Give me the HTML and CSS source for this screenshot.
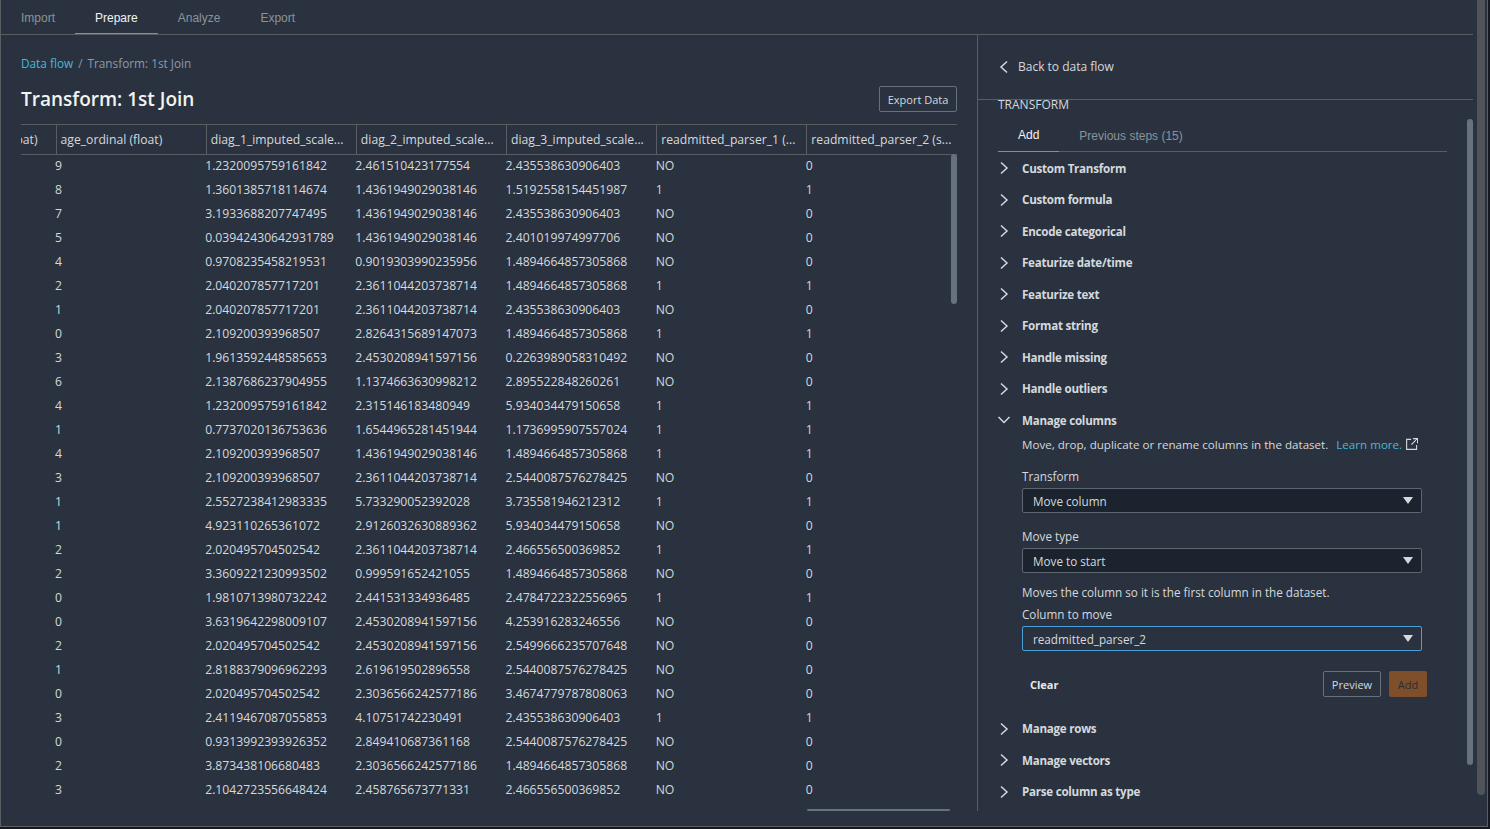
FILE: index.html
```html
<!DOCTYPE html>
<html lang="en">
<head>
    <meta charset="UTF-8">
    <title>Transform: 1st Join</title>
    <link rel="stylesheet" href="styles.css">
</head>
<body>
<div class="app">
    <div class="app-inner">
        <nav class="top-tabs">
            <a class="top-tab">Import</a>
            <a class="top-tab active">Prepare</a>
            <a class="top-tab">Analyze</a>
            <a class="top-tab">Export</a>
        </nav>
        <div class="split">
            <main class="left">
                <div class="crumbs"><a class="link">Data flow</a><span class="sep">/</span><span>Transform: 1st Join</span></div>
                <div class="title-row">
                    <h1 class="title">Transform: 1st Join</h1>
                    <button class="btn export-btn">Export Data</button>
                </div>
                <div class="table-wrap">
                    <table class="grid">
                        <thead>
                            <tr>
                                <th class="col-clip"><div class="clip-text"><span>(float)</span></div></th>
                                <th><div class="th-text">age_ordinal (float)</div></th>
                                <th><div class="th-text">diag_1_imputed_scale...</div></th>
                                <th><div class="th-text">diag_2_imputed_scale...</div></th>
                                <th><div class="th-text">diag_3_imputed_scale...</div></th>
                                <th><div class="th-text">readmitted_parser_1 (...</div></th>
                                <th><div class="th-text">readmitted_parser_2 (s...</div></th>
                            </tr>
                        </thead>
                        <tbody>
                            <tr><td></td><td>9</td><td>1.2320095759161842</td><td>2.461510423177554</td><td>2.435538630906403</td><td>NO</td><td>0</td></tr>
                            <tr><td></td><td>8</td><td>1.3601385718114674</td><td>1.4361949029038146</td><td>1.5192558154451987</td><td>1</td><td>1</td></tr>
                            <tr><td></td><td>7</td><td>3.1933688207747495</td><td>1.4361949029038146</td><td>2.435538630906403</td><td>NO</td><td>0</td></tr>
                            <tr><td></td><td>5</td><td>0.03942430642931789</td><td>1.4361949029038146</td><td>2.401019974997706</td><td>NO</td><td>0</td></tr>
                            <tr><td></td><td>4</td><td>0.9708235458219531</td><td>0.9019303990235956</td><td>1.4894664857305868</td><td>NO</td><td>0</td></tr>
                            <tr><td></td><td>2</td><td>2.040207857717201</td><td>2.3611044203738714</td><td>1.4894664857305868</td><td>1</td><td>1</td></tr>
                            <tr><td></td><td>1</td><td>2.040207857717201</td><td>2.3611044203738714</td><td>2.435538630906403</td><td>NO</td><td>0</td></tr>
                            <tr><td></td><td>0</td><td>2.109200393968507</td><td>2.8264315689147073</td><td>1.4894664857305868</td><td>1</td><td>1</td></tr>
                            <tr><td></td><td>3</td><td>1.9613592448585653</td><td>2.4530208941597156</td><td>0.2263989058310492</td><td>NO</td><td>0</td></tr>
                            <tr><td></td><td>6</td><td>2.1387686237904955</td><td>1.1374663630998212</td><td>2.895522848260261</td><td>NO</td><td>0</td></tr>
                            <tr><td></td><td>4</td><td>1.2320095759161842</td><td>2.315146183480949</td><td>5.934034479150658</td><td>1</td><td>1</td></tr>
                            <tr><td></td><td>1</td><td>0.7737020136753636</td><td>1.6544965281451944</td><td>1.1736995907557024</td><td>1</td><td>1</td></tr>
                            <tr><td></td><td>4</td><td>2.109200393968507</td><td>1.4361949029038146</td><td>1.4894664857305868</td><td>1</td><td>1</td></tr>
                            <tr><td></td><td>3</td><td>2.109200393968507</td><td>2.3611044203738714</td><td>2.5440087576278425</td><td>NO</td><td>0</td></tr>
                            <tr><td></td><td>1</td><td>2.5527238412983335</td><td>5.733290052392028</td><td>3.735581946212312</td><td>1</td><td>1</td></tr>
                            <tr><td></td><td>1</td><td>4.923110265361072</td><td>2.9126032630889362</td><td>5.934034479150658</td><td>NO</td><td>0</td></tr>
                            <tr><td></td><td>2</td><td>2.020495704502542</td><td>2.3611044203738714</td><td>2.466556500369852</td><td>1</td><td>1</td></tr>
                            <tr><td></td><td>2</td><td>3.3609221230993502</td><td>0.999591652421055</td><td>1.4894664857305868</td><td>NO</td><td>0</td></tr>
                            <tr><td></td><td>0</td><td>1.9810713980732242</td><td>2.441531334936485</td><td>2.4784722322556965</td><td>1</td><td>1</td></tr>
                            <tr><td></td><td>0</td><td>3.6319642298009107</td><td>2.4530208941597156</td><td>4.253916283246556</td><td>NO</td><td>0</td></tr>
                            <tr><td></td><td>2</td><td>2.020495704502542</td><td>2.4530208941597156</td><td>2.5499666235707648</td><td>NO</td><td>0</td></tr>
                            <tr><td></td><td>1</td><td>2.8188379096962293</td><td>2.619619502896558</td><td>2.5440087576278425</td><td>NO</td><td>0</td></tr>
                            <tr><td></td><td>0</td><td>2.020495704502542</td><td>2.3036566242577186</td><td>3.4674779787808063</td><td>NO</td><td>0</td></tr>
                            <tr><td></td><td>3</td><td>2.4119467087055853</td><td>4.10751742230491</td><td>2.435538630906403</td><td>1</td><td>1</td></tr>
                            <tr><td></td><td>0</td><td>0.9313992393926352</td><td>2.849410687361168</td><td>2.5440087576278425</td><td>NO</td><td>0</td></tr>
                            <tr><td></td><td>2</td><td>3.873438106680483</td><td>2.3036566242577186</td><td>1.4894664857305868</td><td>NO</td><td>0</td></tr>
                            <tr><td></td><td>3</td><td>2.1042723556648424</td><td>2.458765673771331</td><td>2.466556500369852</td><td>NO</td><td>0</td></tr>
                            <tr><td></td><td>1</td><td>1.0067561524759272</td><td>2.5936030737916924</td><td>4.4064034479150658</td><td>NO</td><td>0</td></tr>
                        </tbody>
                    </table>
                    <div class="vbar"></div>
                    <div class="hbar-track"><div class="hbar"></div></div>
                </div>
            </main>
            <aside class="right">
                <div class="back-row">
                    <svg class="icon" viewBox="0 0 16 16"><path d="M11 2.5 5 8l6 5.5"/></svg>
                    <span>Back to data flow</span>
                </div>
                <div class="panel">
                    <div class="panel-label">TRANSFORM</div>
                    <div class="panel-tabs">
                        <a class="panel-tab active">Add</a>
                        <a class="panel-tab">Previous steps (15)</a>
                    </div>
                    <div class="acc-list">
                        <div class="acc"><svg class="icon" viewBox="0 0 16 16"><path d="M5 2.5 11 8l-6 5.5"/></svg><span>Custom Transform</span></div>
                        <div class="acc"><svg class="icon" viewBox="0 0 16 16"><path d="M5 2.5 11 8l-6 5.5"/></svg><span>Custom formula</span></div>
                        <div class="acc"><svg class="icon" viewBox="0 0 16 16"><path d="M5 2.5 11 8l-6 5.5"/></svg><span>Encode categorical</span></div>
                        <div class="acc"><svg class="icon" viewBox="0 0 16 16"><path d="M5 2.5 11 8l-6 5.5"/></svg><span>Featurize date/time</span></div>
                        <div class="acc"><svg class="icon" viewBox="0 0 16 16"><path d="M5 2.5 11 8l-6 5.5"/></svg><span>Featurize text</span></div>
                        <div class="acc"><svg class="icon" viewBox="0 0 16 16"><path d="M5 2.5 11 8l-6 5.5"/></svg><span>Format string</span></div>
                        <div class="acc"><svg class="icon" viewBox="0 0 16 16"><path d="M5 2.5 11 8l-6 5.5"/></svg><span>Handle missing</span></div>
                        <div class="acc"><svg class="icon" viewBox="0 0 16 16"><path d="M5 2.5 11 8l-6 5.5"/></svg><span>Handle outliers</span></div>
                        <div class="acc"><svg class="icon" viewBox="0 0 16 16"><path d="M2.5 5 8 10.5 13.5 5"/></svg><span>Manage columns</span></div>
                        <div class="acc-body">
                            <p class="desc">Move, drop, duplicate or rename columns in the dataset.<a class="link learn">Learn more.</a><svg class="ext" viewBox="0 0 13 13"><path d="M5.5 1.5H.7v10.8h10.8V7.5M7.5.7h5v5M12.3.7 5.8 7.2"/></svg></p>
                            <label class="field-label first">Transform</label>
                            <div class="select"><span>Move column</span><i class="caret"></i></div>
                            <label class="field-label">Move type</label>
                            <div class="select"><span>Move to start</span><i class="caret"></i></div>
                            <p class="hint">Moves the column so it is the first column in the dataset.</p>
                            <label class="field-label tight">Column to move</label>
                            <div class="select focus"><span>readmitted_parser_2</span><i class="caret"></i></div>
                            <div class="actions">
                                <a class="clear">Clear</a>
                                <button class="btn preview-btn">Preview</button>
                                <button class="btn add-btn">Add</button>
                            </div>
                        </div>
                        <div class="acc"><svg class="icon" viewBox="0 0 16 16"><path d="M5 2.5 11 8l-6 5.5"/></svg><span>Manage rows</span></div>
                        <div class="acc"><svg class="icon" viewBox="0 0 16 16"><path d="M5 2.5 11 8l-6 5.5"/></svg><span>Manage vectors</span></div>
                        <div class="acc"><svg class="icon" viewBox="0 0 16 16"><path d="M5 2.5 11 8l-6 5.5"/></svg><span>Parse column as type</span></div>
                    </div>
                    <div class="panel-bar"></div>
                </div>
            </aside>
        </div>
    </div>
    <div class="page-bar"></div>
</div>
</body>
</html>
```

FILE: styles.css
```css
html, body {
    height: 100%;
}
body {
    margin: 0;
    background-color: #16191f;
    font-family: "Open Sans", "Noto Sans", sans-serif;
    font-size: 12px;
    color: #d5d9dc;
    overflow: hidden;
}
.app {
    position: relative;
    width: 1488px;
    height: 827px;
    box-sizing: border-box;
    background-color: #2a3240;
    border-left: 1px solid #5a5d61;
    border-bottom: 1px solid #5a5d61;
    border-right: 1px solid #5a5d61;
    overflow: hidden;
}
.app-inner {
    width: 1472px;
}
.page-bar {
    position: absolute;
    top: 0;
    left: 1476px;
    width: 8px;
    height: 795px;
    border-radius: 0 0 4px 4px;
    background-color: #50535a;
}

/* top tabs */
.top-tabs {
    display: flex;
    height: 34px;
    border-bottom: 1px solid #5a5d61;
}
.top-tab {
    padding: 0 20px;
    line-height: 36px;
    height: 34px;
    box-sizing: border-box;
    font-family: "Liberation Sans", Arial, sans-serif;
    font-size: 12px;
    color: #8a929c;
}
.top-tab.active {
    color: #f2f3f3;
    border-bottom: 1px solid #4b9fd8;
}

.split {
    display: flex;
    height: 776px;
}

/* left side */
.left {
    width: 977px;
    flex: none;
    box-sizing: border-box;
    height: 776px;
    border-right: 1px solid #5a5d61;
    padding: 20px 20px 0 20px;
    overflow: hidden;
}
.crumbs {
    display: flex;
    line-height: 16px;
    color: #8d99a8;
    font-size: 11.8px;
}
.link {
    color: #44b9d6;
}
.sep {
    margin: 0 5px;
}
.title-row {
    display: flex;
    justify-content: space-between;
    align-items: center;
    margin-top: 8px;
    height: 38px;
}
.title {
    margin: 2px 0 0 0;
    font-size: 19px;
    font-weight: 600;
    color: #f2f3f3;
}
.btn {
    font-family: inherit;
    font-size: 11px;
    font-weight: 500;
    color: #d5d9dc;
    background: transparent;
    border: 1px solid #687078;
    border-radius: 2px;
    padding: 0;
    height: 26px;
}
.export-btn {
    width: 78px;
    margin-top: 2px;
}
.table-wrap {
    position: relative;
    margin-top: 7px;
    width: 936px;
    height: 687px;
    overflow: hidden;
}
.grid {
    border-collapse: collapse;
    table-layout: fixed;
    width: 936px;
    font-size: 12.2px;
}
.grid th {
    width: 150px;
    height: 30px;
    padding: 0;
    font-weight: 400;
    text-align: left;
    border-top: 1px solid #5a5d61;
    border-bottom: 1px solid #5a5d61;
    border-left: 1px solid #5a5d61;
    box-sizing: border-box;
}
.grid th.col-clip {
    width: 35px;
    border-left: 0;
}
.clip-text {
    display: flex;
    justify-content: flex-end;
    padding-right: 18px;
    overflow: hidden;
    white-space: nowrap;
}
.clip-text span {
    flex: none;
}
.th-text {
    padding-left: 4px;
    white-space: nowrap;
    overflow: hidden;
}
.grid td {
    height: 24px;
    padding: 0 0 2px 0;
    box-sizing: border-box;
    white-space: nowrap;
    line-height: 22px;
    position: relative;
    left: -1px;
}
.vbar {
    position: absolute;
    top: 30px;
    right: 0;
    width: 6px;
    height: 150px;
    border-radius: 3px;
    background-color: #687180;
}
.hbar-track {
    position: absolute;
    bottom: 0;
    left: 0;
    width: 100%;
    height: 2px;
    background-color: #2a3240;
}
.hbar {
    margin-left: 786px;
    width: 143px;
    height: 2px;
    border-radius: 1px;
    background-color: #687180;
}

/* right side */
.right {
    position: relative;
    flex: 1;
    height: 776px;
    overflow: hidden;
}
.back-row {
    display: flex;
    align-items: center;
    height: 65px;
    padding-left: 18px;
    padding-bottom: 1px;
    border-bottom: 1px solid #5a5d61;
    box-sizing: border-box;
    gap: 6px;
}
.icon {
    width: 16px;
    height: 16px;
    fill: none;
    stroke: #d5d9dc;
    stroke-width: 1.5;
    flex: none;
}
.panel {
    padding: 0 26px 0 20px;
}
.panel-label {
    line-height: 12px;
    margin-top: -1px;
}
.panel-tabs {
    display: flex;
    height: 36px;
    margin-top: 5px;
    border-bottom: 1px solid #5a5d61;
    box-sizing: border-box;
    align-items: stretch;
}
.panel-tab {
    padding: 13px 20px 0 20px;
    font-family: "Liberation Sans", Arial, sans-serif;
    font-size: 12px;
    color: #8a929c;
    line-height: 14px;
}
.panel-tab.active {
    color: #f2f3f3;
    border-bottom: 1px solid #4b9fd8;
    margin-bottom: -1px;
    padding-top: 12px;
}
.acc-list {
    margin-top: 0.7px;
}
.acc {
    display: flex;
    align-items: center;
    height: 31.5px;
    gap: 10px;
    font-weight: 700;
    font-size: 11.6px;
    letter-spacing: -0.25px;
}
.acc .icon {
    margin-left: -2px;
}
.acc-body {
    padding-left: 24px;
    width: 405px;
    height: 276px;
    font-size: 11.7px;
}
.desc, .hint {
    margin: 0;
    line-height: 16px;
    white-space: nowrap;
    display: flex;
    align-items: center;
}
.desc {
    margin-top: 1px;
    font-size: 11.6px;
}
.learn {
    margin-left: 8px;
}
.ext {
    width: 12px;
    height: 12px;
    flex: none;
    margin-left: 4px;
    margin-top: -2px;
    fill: none;
    stroke: #d5d9dc;
    stroke-width: 1.2;
}
.field-label {
    display: block;
    line-height: 16px;
    margin-top: 15px;
    margin-bottom: 4px;
}
.field-label.first {
    margin-top: 15px;
}
.field-label.tight {
    margin-top: 6px;
}
.select {
    display: flex;
    justify-content: space-between;
    align-items: center;
    box-sizing: border-box;
    width: 400px;
    height: 25px;
    padding: 0 8px 0 10px;
    background-color: #1b232e;
    border: 1px solid #5f6670;
    border-radius: 2px;
}
.select.focus {
    background-color: transparent;
    border-color: #4b9fd8;
}
.caret {
    width: 0;
    height: 0;
    border-left: 5px solid transparent;
    border-right: 5px solid transparent;
    border-top: 7px solid #d5d9dc;
}
.hint {
    margin-top: 11px;
}
.actions {
    display: flex;
    align-items: center;
    margin-top: 20px;
    width: 405px;
}
.clear {
    font-size: 11px;
    font-weight: 700;
    color: #e6eaea;
    margin-left: 8px;
    margin-right: auto;
}
.preview-btn {
    width: 58px;
    margin-right: 8px;
}
.add-btn {
    width: 38px;
    border: 0;
    background-color: #7f4f2b;
    color: #2a2c33;
}
.panel-bar {
    position: absolute;
    top: 84px;
    left: 489px;
    width: 6px;
    height: 646px;
    border-radius: 3px;
    background-color: #687180;
}
```
